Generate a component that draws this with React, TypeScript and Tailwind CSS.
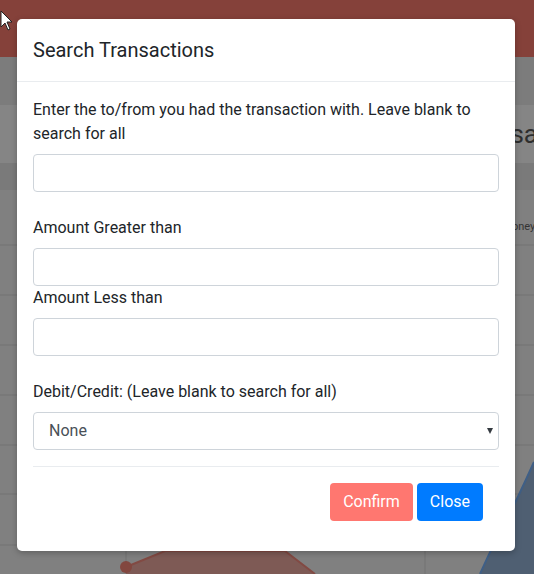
import React from "react";

export default function App() {
  const font = { fontFamily: "Roboto, 'Liberation Sans', sans-serif" };
  return (
    <div className="relative w-[534px] h-[574px] overflow-hidden bg-[#808080]" style={font}>
      {/* dimmed page behind */}
      <div className="flex flex-col w-full">
        <div className="h-[57px] bg-[#85413a]" />
        <div className="h-[48px] bg-[#7c7c7c]" />
        <div className="h-[58px] bg-[#858585] flex items-center justify-end pr-0 overflow-hidden">
          <span className="text-[26px] text-[#2e2e2e] mr-[-4px]">sa</span>
        </div>
        <div className="h-[27px] bg-[#7a7a7a]" />
        <div className="relative h-[384px]">
          <svg width="534" height="384" className="block">
            {[55, 105, 155, 205, 255, 304, 355].map((y) => (
              <line key={y} x1="0" x2="534" y1={y} y2={y} stroke="#737373" strokeWidth="1" />
            ))}
            <line x1="126" x2="126" y1="300" y2="384" stroke="#737373" />
            <line x1="270" x2="270" y1="300" y2="384" stroke="#737373" />
            <line x1="425" x2="425" y1="300" y2="384" stroke="#737373" />
            <text x="512" y="40" fontSize="11" fill="#333" fontFamily="Roboto, sans-serif">oney</text>
            <path d="M126 377 L165 361 L285 361 L315 384 L126 384 Z" fill="#7e5a55" />
            <path d="M126 377 L165 361 L285 361 L315 384" fill="none" stroke="#824a43" strokeWidth="2" />
            <circle cx="126" cy="377" r="6" fill="#82473f" />
            <path d="M480 384 Q500 340 515 313 Q525 292 534 272 L534 384 Z" fill="#4f5f72" />
            <path d="M480 384 Q500 340 515 313 Q525 292 534 272" fill="none" stroke="#3f5f86" strokeWidth="2" />
          </svg>
        </div>
      </div>

      {/* mouse cursor */}
      <svg className="absolute left-0 top-[10px]" width="14" height="22" viewBox="0 0 14 22">
        <path d="M1 1 L1 17 L5 13 L8 20 L10 19 L7 12 L12 12 Z" fill="#fff" stroke="#222" strokeWidth="1" />
      </svg>

      {/* modal */}
      <div className="absolute left-[17px] top-[19px] w-[498px] h-[532px] bg-white rounded-[5px] shadow-[0_2px_6px_rgba(0,0,0,0.25)] text-[#212529]">
        <div className="px-4 pt-4 pb-4 border-b border-[#e9ecef]">
          <h5 className="text-[20px] leading-[30px] font-normal">Search Transactions</h5>
        </div>
        <div className="px-4 pt-4 text-[16px] leading-[24px]">
          <p>Enter the to/from you had the transaction with. Leave blank to search for all</p>
          <input className="mt-2 block w-full h-[38px] border border-[#ced4da] rounded-[4px] px-3" />
          <label className="block mt-[24px]">Amount Greater than</label>
          <input className="mt-2 block w-full h-[38px] border border-[#ced4da] rounded-[4px] px-3" />
          <label className="block">Amount Less than</label>
          <input className="mt-2 block w-full h-[38px] border border-[#ced4da] rounded-[4px] px-3" />
          <label className="block mt-[24px]">Debit/Credit: (Leave blank to search for all)</label>
          <div className="mt-2 relative h-[38px] border border-[#ced4da] rounded-[4px] flex items-center pl-[15px] text-[#495057]">
            <span>None</span>
            <svg className="absolute right-[5px] top-[15px]" width="6" height="6" viewBox="0 0 6 6">
              <path d="M0 0 L6 0 L3 6 Z" fill="#343a40" />
            </svg>
          </div>
          <div className="mt-4 border-t border-[#e9ecef]" />
          <div className="mt-4 flex justify-end gap-[4px] pr-4">
            <button className="h-[38px] px-[13px] rounded-[4px] bg-[#ff7770] text-white text-[16px]">Confirm</button>
            <button className="h-[38px] px-[13px] rounded-[4px] bg-[#007bff] text-white text-[16px]">Close</button>
          </div>
        </div>
      </div>
    </div>
  );
}
